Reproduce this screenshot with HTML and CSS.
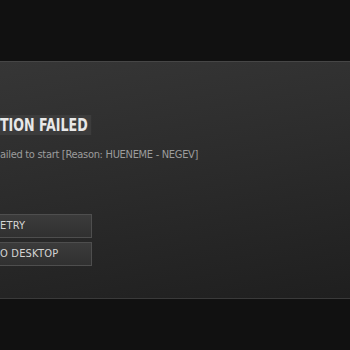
FILE: index.html
```html
<!DOCTYPE html>
<html>
<head>
<meta charset="utf-8">
<link rel="stylesheet" href="styles.css">
</head>
<body>
<div class="panel">
  <div class="content">
    <div class="title">TION FAILED</div>
    <div class="reason">ailed to start [Reason: HUENEME - NEGEV]</div>
    <div class="buttons">
      <div class="btn">ETRY</div>
      <div class="btn">O DESKTOP</div>
    </div>
  </div>
</div>
</body>
</html>
```
FILE: styles.css
```css
html, body {
  margin: 0;
  padding: 0;
  background: #111111;
  width: 350px;
  height: 350px;
  overflow: hidden;
}
.panel {
  margin-top: 61px;
  height: 236px;
  border-top: 1px solid #464646;
  border-bottom: 1px solid #3a3a3a;
  background: linear-gradient(170deg, #363636 0%, #2c2c2c 45%, #1f1f1f 100%);
}
.content {
  display: flex;
  flex-direction: column;
  align-items: flex-start;
  padding-top: 53px;
}
.title {
  background: #3c3c3c;
  color: #e8e8e8;
  font-family: "DejaVu Sans", sans-serif;
  font-stretch: condensed;
  font-weight: bold;
  font-size: 18px;
  line-height: 20px;
  padding: 0 5px 0 0;
  height: 20px;
  transform: scaleX(0.78);
  transform-origin: left center;
}
.reason {
  margin-top: 13px;
  color: #9c9c9c;
  font-family: "DejaVu Sans", sans-serif;
  font-stretch: condensed;
  font-size: 11px;
  letter-spacing: -0.3px;
  line-height: 14px;
}
.buttons {
  margin-top: 52px;
  display: flex;
  flex-direction: column;
  gap: 4px;
}
.btn {
  width: 91px;
  height: 22px;
  box-sizing: content-box;
  border: 1px solid #4e4e4e;
  border-left: none;
  background: linear-gradient(180deg, #3b3b3b, #303030);
  color: #d4d4d4;
  font-family: "DejaVu Sans", sans-serif;
  font-stretch: condensed;
  font-size: 11px;
  letter-spacing: 0.2px;
  line-height: 22px;
}
```
